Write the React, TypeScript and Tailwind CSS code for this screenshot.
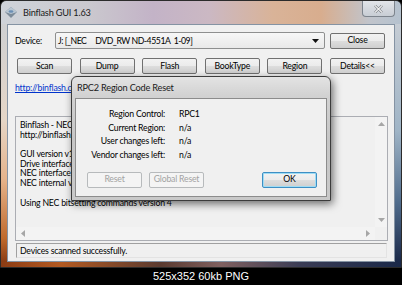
import React from 'react';
import clsx from 'clsx';

const font = "font-['Lato','Liberation_Sans',sans-serif]";

const Btn = ({ label, disabled, focus }: { label: string; disabled?: boolean; focus?: boolean }) => (
  <div
    className={clsx(
      'h-[16px] w-[55px] shrink-0 rounded-[2px] border flex items-center justify-center leading-none whitespace-nowrap',
      disabled
        ? 'border-[#b7babc] bg-[#f4f4f4] text-[#a3a3a3]'
        : focus
          ? 'border-[#3d8fc4] shadow-[inset_0_0_0_1px_#9fdcf4] bg-[linear-gradient(#f2f2f2_0%,#ebebeb_50%,#dddddd_51%,#cfcfcf_100%)] text-black'
          : 'border-[#707070] bg-[linear-gradient(#f2f2f2_0%,#ebebeb_50%,#dddddd_51%,#cfcfcf_100%)] text-black'
    )}
  >
    {label}
  </div>
);

const Arrow = ({ dir }: { dir: 'up' | 'down' | 'left' | 'right' }) => {
  const pts = {
    up: '0,4 3.5,0 7,4',
    down: '0,0 3.5,4 7,0',
    left: '4,0 0,3.5 4,7',
    right: '0,0 4,3.5 0,7',
  }[dir];
  const vert = dir === 'up' || dir === 'down';
  return (
    <svg width={vert ? 7 : 4} height={vert ? 4 : 7} viewBox={vert ? '0 0 7 4' : '0 0 4 7'}>
      <polygon points={pts} fill="#a6a6a6" />
    </svg>
  );
};

const lines = [
  'Binflash - NEC version 1.63',
  'http://binflash.cdfreaks.com',
  '',
  'GUI version v1.63',
  'Drive interface version 1.0',
  'NEC interface version 1.0',
  'NEC internal version 1.0',
  '',
  'Using NEC bitsetting commands version 4',
];

export default function App() {
  return (
    <div className={clsx('relative w-[402px] h-[285px] bg-black overflow-hidden text-black text-[8.7px] tracking-[-0.2px]', font)}>
      {/* main window */}
      <div className="w-[402px] h-[268px] flex flex-col rounded-t-[6px] border border-[#2b2b2b] overflow-hidden">
        {/* title bar */}
        <div className="h-[23px] shrink-0 flex items-start bg-[linear-gradient(90deg,#cfd3d9_0%,#cac8ce_22%,#c3b3c7_38%,#cbb8c3_52%,#d9b398_68%,#d8ad8e_80%,#c1c4cb_92%,#b5c2cf_100%)]">
          <div className="flex items-center h-[23px] pl-[3px]">
            <svg width="14" height="14" viewBox="0 0 14 14">
              <polygon points="7,1 13,6 7,12 1,6" fill="#7c8b99" />
              <polygon points="7,1 13,6 7,8 1,6" fill="#b9c6d2" />
              <ellipse cx="7" cy="5.5" rx="2.5" ry="1.3" fill="#6b8fb5" />
            </svg>
            <span className="ml-[5px] text-[9.2px] text-[#1a1a1a]">Binflash GUI 1.63</span>
          </div>
          <div className="ml-auto mr-[6px] w-[33px] h-[16px] rounded-b-[4px] border border-t-0 border-[#7d848d] bg-[linear-gradient(#e2e5ea,#c8cdd4)] flex items-center justify-center">
            <svg width="9" height="8" viewBox="0 0 9 8">
              <path d="M1 0.5 L8 7.5 M8 0.5 L1 7.5" stroke="#70757c" strokeWidth="2.4" />
              <path d="M1 0.5 L8 7.5 M8 0.5 L1 7.5" stroke="#f2f2f2" strokeWidth="1.1" />
            </svg>
          </div>
        </div>

        <div className="flex flex-1 min-h-0">
          <div className="w-[6px] shrink-0 bg-[linear-gradient(#cfd0d2_0%,#e5d6c7_40%,#e6b48c_65%,#c06a2c_90%,#8a3c14_100%)]" />
          {/* client */}
          <div className="flex-1 flex flex-col bg-[#f0f0f0] border border-[#8593a3]">
            <div className="flex items-center mt-[7px] pl-[7px] h-[17px]">
              <span className="w-[40px]">Device:</span>
              <div className="w-[270px] h-[17px] border border-[#8e8f8f] rounded-[2px] bg-[linear-gradient(#f7f7f7,#e9e9e9)] flex items-center pl-[2px] pr-[5px]">
                <span className="whitespace-pre tracking-[-0.45px]">J: [_NEC     DVD_RW ND-4551A  1-09]</span>
                <svg className="ml-auto" width="7" height="4" viewBox="0 0 7 4">
                  <polygon points="0,0 7,0 3.5,4" fill="#111" />
                </svg>
              </div>
              <div className="ml-[5px]">
                <Btn label="Close" />
              </div>
            </div>

            <div className="flex mt-[9px] pl-[9px] gap-[7.6px]">
              {['Scan', 'Dump', 'Flash', 'BookType', 'Region', 'Details<<'].map((b) => (
                <Btn key={b} label={b} />
              ))}
            </div>

            <div className="mt-[8px] pl-[7px] leading-[12px] text-[#0033cc] underline">
              http://binflash.cdfreaks.com
            </div>

            {/* log box */}
            <div className="mt-[22px] ml-[7px] w-[373px] h-[125px] border border-[#abadb3] bg-[#f0f0f0] flex flex-col">
              <div className="flex flex-1 min-h-0">
                <div className="flex-1 pt-[3px] pl-[4px] leading-[9.7px] whitespace-pre">
                  {lines.map((l, i) => (
                    <div key={i} className="h-[9.7px]">{l}</div>
                  ))}
                </div>
                <div className="w-[12px] bg-[#f3f3f3] flex flex-col items-center justify-between py-[5px]">
                  <Arrow dir="up" />
                  <Arrow dir="down" />
                </div>
              </div>
              <div className="h-[13px] flex">
                <div className="flex-1 bg-[#f3f3f3] flex items-center justify-between px-[5px]">
                  <Arrow dir="left" />
                  <Arrow dir="right" />
                </div>
                <div className="w-[12px] bg-[#f0f0f0]" />
              </div>
            </div>

            <div className="mt-[2px] ml-[8px] w-[371px] h-[15px] border border-[#a0a0a0] border-r-[#e3e3e3] border-b-[#e3e3e3] flex items-center pl-[3px]">
              Devices scanned successfully.
            </div>
          </div>
          <div className="w-[6px] shrink-0 bg-[linear-gradient(#c5ccd4_0%,#9fb4c6_45%,#506c8c_75%,#1a2848_100%)]" />
        </div>
        <div className="h-[5px] shrink-0 bg-[linear-gradient(90deg,#8c3c14_0%,#b35a22_15%,#5a3a30_40%,#806060_55%,#3a3c55_75%,#1a2848_100%)]" />
      </div>

      <div className="h-[17px] flex items-center justify-center text-white text-[11px] tracking-normal font-['Liberation_Sans',sans-serif]">
        525x352 60kb PNG
      </div>

      {/* dialog overlay */}
      <div className="absolute left-[71px] top-[76px] w-[260px] h-[125px] rounded-t-[6px] border border-[#3c3c3c] shadow-[2px_3px_8px_rgba(0,0,0,0.55)] bg-[linear-gradient(#e3e3e3_0%,#d2d2d2_15%,#c6c6c6_50%,#c9c9c9_100%)] flex flex-col px-[3px] pb-[3px]">
        <div className="h-[21px] shrink-0 flex items-center pl-[2px] text-[9.2px] text-[#1a1a1a]">
          RPC2 Region Code Reset
        </div>
        <div className="flex-1 border border-[#8c8c8c] bg-[#f0f0f0] flex flex-col">
          <div className="grid grid-cols-[89px_1fr] gap-x-[14px] pt-[8px] leading-[13.7px]">
            <span className="text-right">Region Control:</span>
            <span>RPC1</span>
            <span className="text-right">Current Region:</span>
            <span>n/a</span>
            <span className="text-right">User changes left:</span>
            <span>n/a</span>
            <span className="text-right">Vendor changes left:</span>
            <span>n/a</span>
          </div>
          <div className="flex mt-[10px] pl-[11px] gap-[7px]">
            <Btn label="Reset" disabled />
            <Btn label="Global Reset" disabled />
            <div className="ml-auto mr-[9px]">
              <Btn label="OK" focus />
            </div>
          </div>
        </div>
      </div>
    </div>
  );
}
